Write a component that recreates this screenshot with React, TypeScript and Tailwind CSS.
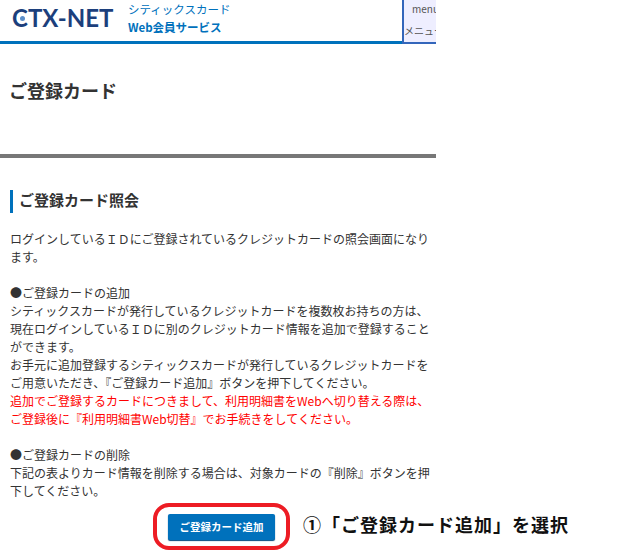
const font = "font-['Noto_Sans_CJK_JP','Liberation_Sans',sans-serif]";

function Header() {
  return (
    <header className="flex h-[44px] w-[436px] border-b-[3px] border-[#0071bc]">
      <div className="relative ml-[12px] mt-[3px] w-[100px] font-['Lato',sans-serif] text-[24px] leading-[30px] font-bold whitespace-nowrap text-[#1c3f7c]">
        CTX-NET
        <span className="absolute left-[8px] top-[13px] h-[5px] w-[5px] rounded-full bg-[#5b8ec9]" />
      </div>
      <div className="ml-[16px] text-[11.5px] leading-[18px] text-[#0071bc]">
        <div>シティックスカード</div>
        <div className="font-bold">Web会員サービス</div>
      </div>
      <div className="ml-auto -mb-[3px] h-[44px] w-[34px] overflow-hidden border-b-2 border-l-2 border-[#3366bb] bg-[#eeeeff] text-[10px] leading-[14px] whitespace-nowrap text-[#555555]">
        <div className="mt-[2px] pl-[8px]">menu</div>
        <div className="mt-[8px]">メニュー</div>
      </div>
    </header>
  );
}

export default function App() {
  return (
    <div className={`h-[557px] w-[631px] overflow-hidden bg-white ${font} text-[#333333]`}>
      <Header />
      <h1 className="mt-[33px] pl-[9px] text-[18px] leading-[26px] font-bold">ご登録カード</h1>
      <div className="mt-[51px] h-[4px] w-[436px] bg-[#777777]" />
      <h2 className="mt-[32px] ml-[10px] h-[23px] border-l-[3px] border-[#0071bc] pl-[6px] text-[15px] leading-[20px] font-bold">ご登録カード照会</h2>
      <div className="mt-[17px] w-[431px] pl-[10px] text-[12px] leading-[18px]">
        <p>ログインしているＩＤにご登録されているクレジットカードの照会画面になります。</p>
        <p className="mt-[18px]">●ご登録カードの追加</p>
        <p>シティックスカードが発行しているクレジットカードを複数枚お持ちの方は、現在ログインしているＩＤに別のクレジットカード情報を追加で登録することができます。</p>
        <p>お手元に追加登録するシティックスカードが発行しているクレジットカードをご用意いただき、『ご登録カード追加』ボタンを押下してください。</p>
        <p className="text-[#ff0000]">追加でご登録するカードにつきまして、利用明細書をWebへ切り替える際は、ご登録後に『利用明細書Web切替』でお手続きをしてください。</p>
        <p className="mt-[18px]">●ご登録カードの削除</p>
        <p>下記の表よりカード情報を削除する場合は、対象カードの『削除』ボタンを押下してください。</p>
      </div>
      <div className="mt-[3px] ml-[153px] flex items-center">
        <div className="rounded-[16px] border-[4px] border-[#ed1c24] px-[11px] pt-[7px] pb-[6px]">
          <button className="block h-[26px] w-[107px] rounded-[2px] bg-[#0071bc] text-[10.5px] leading-[26px] font-bold text-white shadow-[0_1px_1px_#004a80]">ご登録カード追加</button>
        </div>
        <div className="-mt-[6px] ml-[13px] text-[18px] leading-[24px] font-bold tracking-[1px] whitespace-nowrap text-[#111111]">①「ご登録カード追加」を選択</div>
      </div>
    </div>
  );
}
